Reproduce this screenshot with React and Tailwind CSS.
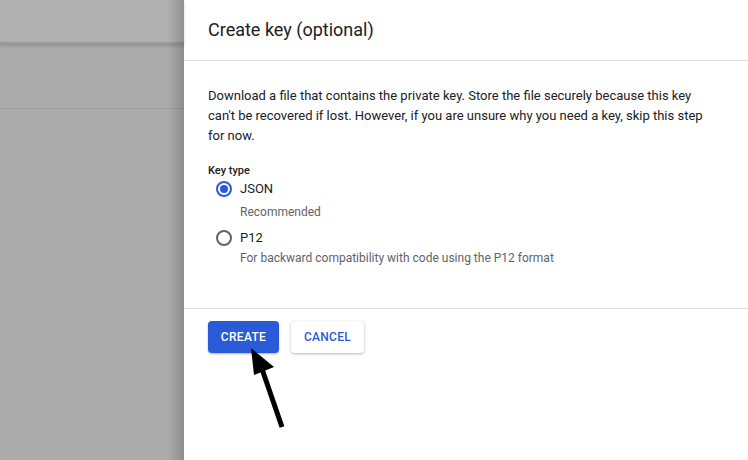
export default function App() {
  return (
    <div className="flex w-[748px] h-[460px] overflow-hidden bg-white" style={{ fontFamily: "Roboto, 'Liberation Sans', sans-serif" }}>
      <div className="relative w-[184px] h-full bg-[#ababab] flex flex-col">
        <div className="h-[44px] bg-[#b0b0b0] border-b-2 border-[#9a9a9a] shadow-[0_2px_3px_rgba(0,0,0,0.15)]" />
        <div className="h-[65px] border-b border-[#9e9e9e]" />
        <div className="absolute right-0 top-0 h-full w-[16px] bg-gradient-to-r from-transparent to-[rgba(0,0,0,0.18)]" />
      </div>
      <div className="relative flex-1 flex flex-col">
        <div className="h-[61px] border-b border-[#e0e0e0] flex items-center px-6">
          <h1 className="text-[18px] text-[#202124] pb-[2px]">Create key (optional)</h1>
        </div>
        <div className="px-6 pt-[25px] h-[248px] border-b border-[#e0e0e0]">
          <p className="text-[13px] leading-[20px] text-[#202124] w-[510px]">
            Download a file that contains the private key. Store the file securely because this key can't be recovered if lost. However, if you are unsure why you need a key, skip this step for now.
          </p>
          <div className="mt-[18px] text-[11px] font-medium text-[#202124] leading-[14px]">Key type</div>
          <div className="mt-[1px] flex items-center h-[20px]">
            <div className="ml-[8px] w-[16px] h-[16px] rounded-full border-2 border-[#2a5bd7] flex items-center justify-center">
              <div className="w-[8px] h-[8px] rounded-full bg-[#2a5bd7]" />
            </div>
            <span className="ml-[8px] text-[13px] text-[#202124]">JSON</span>
          </div>
          <div className="ml-[32px] mt-[3px] text-[12px] leading-[20px] text-[#5f6368]">Recommended</div>
          <div className="mt-[6px] flex items-center h-[20px]">
            <div className="ml-[8px] w-[16px] h-[16px] rounded-full border-2 border-[#5f6368]" />
            <span className="ml-[8px] text-[13px] text-[#202124]">P12</span>
          </div>
          <div className="ml-[32px] mt-[0px] text-[12px] leading-[20px] text-[#5f6368]">For backward compatibility with code using the P12 format</div>
        </div>
        <div className="px-6 pt-[12px] flex gap-3">
          <button className="h-[32px] w-[71px] rounded-[4px] bg-[#2a5bd7] text-white text-[12px] font-medium tracking-[0.3px] shadow-[0_1px_2px_rgba(0,0,0,0.3)]">CREATE</button>
          <button className="h-[32px] w-[73px] rounded-[4px] bg-white text-[#2a5bd7] text-[12px] font-medium tracking-[0.3px] shadow-[0_1px_3px_rgba(0,0,0,0.3)]">CANCEL</button>
        </div>
        <svg className="absolute left-[60px] top-[345px]" width="50" height="90" viewBox="0 0 50 90">
          <polygon points="7,3 30,22 10,30" fill="#000" />
          <line x1="18" y1="24" x2="38" y2="82" stroke="#000" strokeWidth="5" />
        </svg>
      </div>
    </div>
  );
}
